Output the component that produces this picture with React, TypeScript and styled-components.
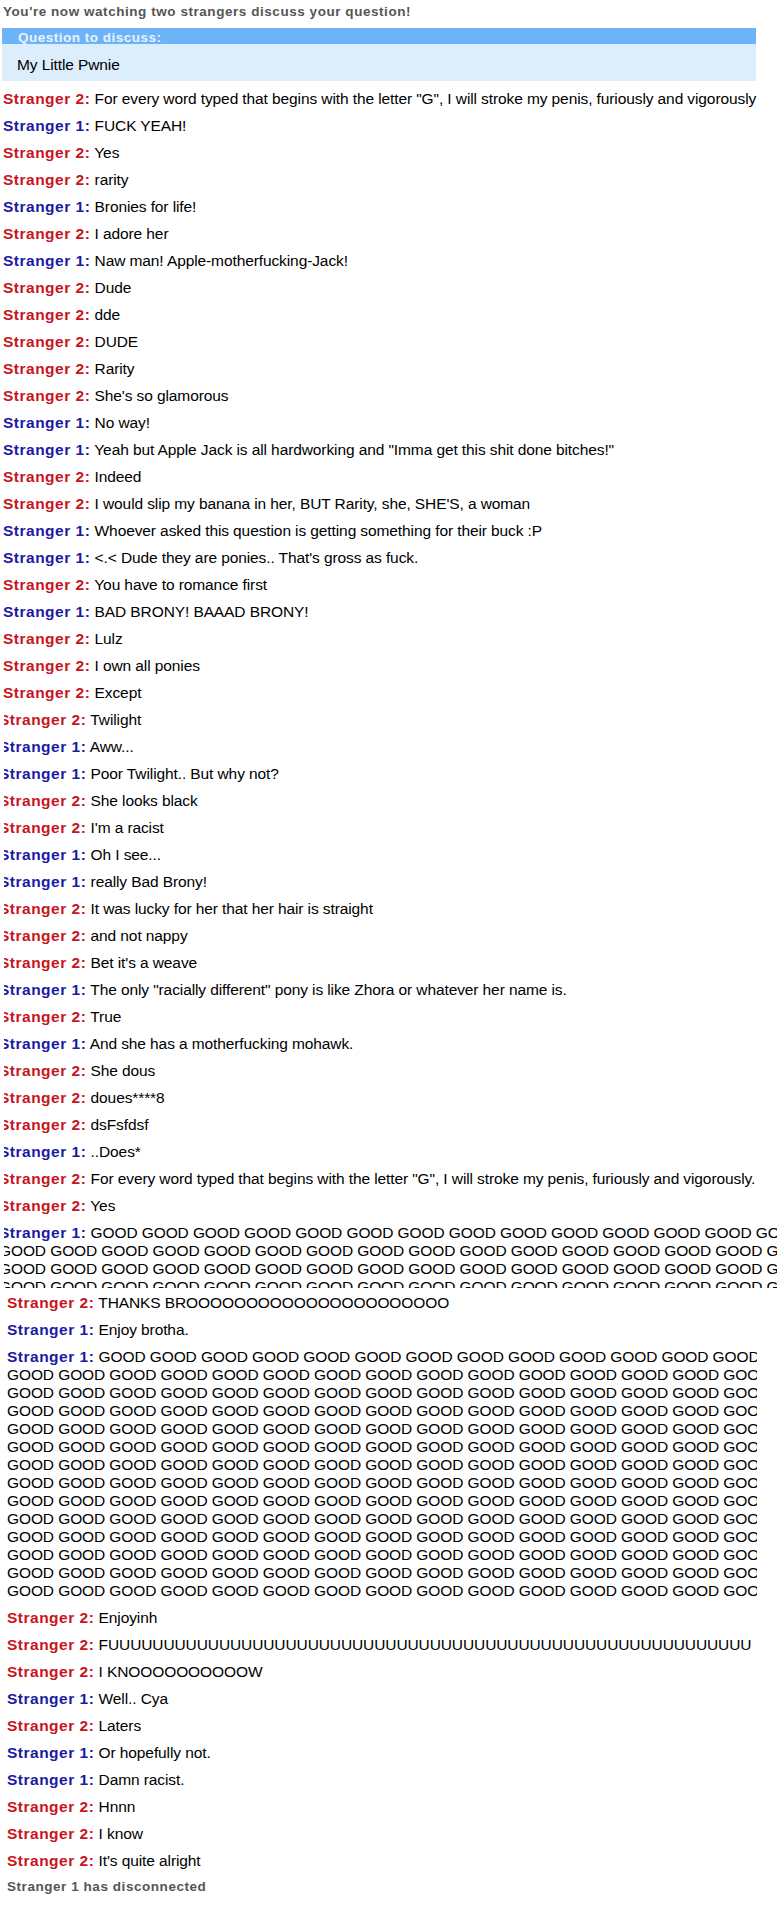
import React from 'react';
import styled, { createGlobalStyle } from 'styled-components';

type Who = 1 | 2;
type Line = [Who, string];

const GlobalStyle = createGlobalStyle`
  html, body {
    margin: 0;
    padding: 0;
    background: #ffffff;
  }
  body {
    font-family: "Liberation Sans", Arial, sans-serif;
    color: #000;
  }
`;

const goodRow = (n: number) => Array(n).fill('GOOD').join(' ');
const goodBlock = (first: number, rest: number, rows: number) =>
  [goodRow(first), ...Array(rows - 1).fill(goodRow(rest))].join('\n');

const firstPart: Line[] = [
  [2, 'For every word typed that begins with the letter "G", I will stroke my penis, furiously and vigorously'],
  [1, 'FUCK YEAH!'],
  [2, 'Yes'],
  [2, 'rarity'],
  [1, 'Bronies for life!'],
  [2, 'I adore her'],
  [1, 'Naw man! Apple-motherfucking-Jack!'],
  [2, 'Dude'],
  [2, 'dde'],
  [2, 'DUDE'],
  [2, 'Rarity'],
  [2, "She's so glamorous"],
  [1, 'No way!'],
  [1, 'Yeah but Apple Jack is all hardworking and "Imma get this shit done bitches!"'],
  [2, 'Indeed'],
  [2, "I would slip my banana in her, BUT Rarity, she, SHE'S, a woman"],
  [1, 'Whoever asked this question is getting something for their buck :P'],
  [1, "<.< Dude they are ponies.. That's gross as fuck."],
  [2, 'You have to romance first'],
  [1, 'BAD BRONY! BAAAD BRONY!'],
  [2, 'Lulz'],
  [2, 'I own all ponies'],
  [2, 'Except'],
];

const secondPart: Line[] = [
  [2, 'Twilight'],
  [1, 'Aww...'],
  [1, 'Poor Twilight.. But why not?'],
  [2, 'She looks black'],
  [2, "I'm a racist"],
  [1, 'Oh I see...'],
  [1, 'really Bad Brony!'],
  [2, 'It was lucky for her that her hair is straight'],
  [2, 'and not nappy'],
  [2, "Bet it's a weave"],
  [1, 'The only "racially different" pony is like Zhora or whatever her name is.'],
  [2, 'True'],
  [1, 'And she has a motherfucking mohawk.'],
  [2, 'She dous'],
  [2, 'doues****8'],
  [2, 'dsFsfdsf'],
  [1, '..Does*'],
  [2, 'For every word typed that begins with the letter "G", I will stroke my penis, furiously and vigorously.'],
  [2, 'Yes'],
  [1, goodBlock(16, 17, 5)],
];

const thirdPart: Line[] = [
  [2, 'THANKS BR' + 'O'.repeat(22)],
  [1, 'Enjoy brotha.'],
  [1, goodBlock(15, 16, 14)],
  [2, 'Enjoyinh'],
  [2, 'F' + 'U'.repeat(58)],
  [2, 'I KN' + 'O'.repeat(10) + 'W'],
  [1, 'Well.. Cya'],
  [2, 'Laters'],
  [1, 'Or hopefully not.'],
  [1, 'Damn racist.'],
  [2, 'Hnnn'],
  [2, 'I know'],
  [2, "It's quite alright"],
];

const Page = styled.div`
  width: 777px;
  overflow: hidden;
`;

// each band is one stretch of the log, cut off on its sides
const Band = styled.div<{ $h: number; $clip?: number; $w?: number }>`
  height: ${(p) => p.$h}px;
  margin-left: ${(p) => p.$clip ?? 0}px;
  width: ${(p) => (p.$w ? `${p.$w}px` : 'auto')};
  overflow: hidden;
`;

const Log = styled.div<{ $indent: number; $top?: number }>`
  margin-left: ${(p) => p.$indent}px;
  padding-top: ${(p) => p.$top ?? 0}px;
  width: 1000px;
`;

const Status = styled.div`
  font-size: 13.5px;
  font-weight: bold;
  letter-spacing: 0.55px;
  line-height: 16px;
  color: #555555;
`;

const Title = styled(Status)`
  padding-top: 4px;
`;

const QuestionHead = styled.div`
  margin: 8px 0 0 -1px;
  width: 754px;
  height: 16px;
  padding-left: 16px;
  box-sizing: border-box;
  background: #6db3f8;
  color: #e8f3fd;
  font-size: 13.5px;
  font-weight: bold;
  letter-spacing: 0.5px;
  line-height: 19px;
`;

const QuestionBody = styled.div`
  margin-left: -1px;
  width: 754px;
  height: 37px;
  padding: 12px 0 0 15px;
  box-sizing: border-box;
  background: #dcedfc;
  font-size: 15.5px;
  letter-spacing: -0.1px;
  line-height: 18px;
`;

const List = styled.div<{ $gap?: number }>`
  margin-top: ${(p) => p.$gap ?? 0}px;
`;

const Msg = styled.div`
  font-size: 15.5px;
  letter-spacing: -0.1px;
  line-height: 18px;
  margin-bottom: 9px;
  white-space: pre;
`;

const Source = styled.span<{ $who: Who }>`
  font-weight: bold;
  letter-spacing: 0.5px;
  color: ${(p) => (p.$who === 1 ? '#1a1aa3' : '#c8141e')};
`;

const Messages = ({ lines }: { lines: Line[] }) => (
  <>
    {lines.map(([who, text], i) => (
      <Msg key={i}>
        <Source $who={who}>Stranger {who}:</Source> {text}
      </Msg>
    ))}
  </>
);

export default function App() {
  return (
    <>
      <GlobalStyle />
      <Page>
        <Band $h={706}>
          <Log $indent={3}>
            <Title>You're now watching two strangers discuss your question!</Title>
            <QuestionHead>Question to discuss:</QuestionHead>
            <QuestionBody>My Little Pwnie</QuestionBody>
            <List $gap={9}>
              <Messages lines={firstPart} />
            </List>
          </Log>
        </Band>
        <Band $h={582} $clip={4}>
          <Log $indent={-5} $top={5}>
            <Messages lines={secondPart} />
          </Log>
        </Band>
        <Band $h={624} $w={757}>
          <Log $indent={7} $top={6}>
            <Messages lines={thirdPart} />
            <Status>Stranger 1 has disconnected</Status>
          </Log>
        </Band>
      </Page>
    </>
  );
}
